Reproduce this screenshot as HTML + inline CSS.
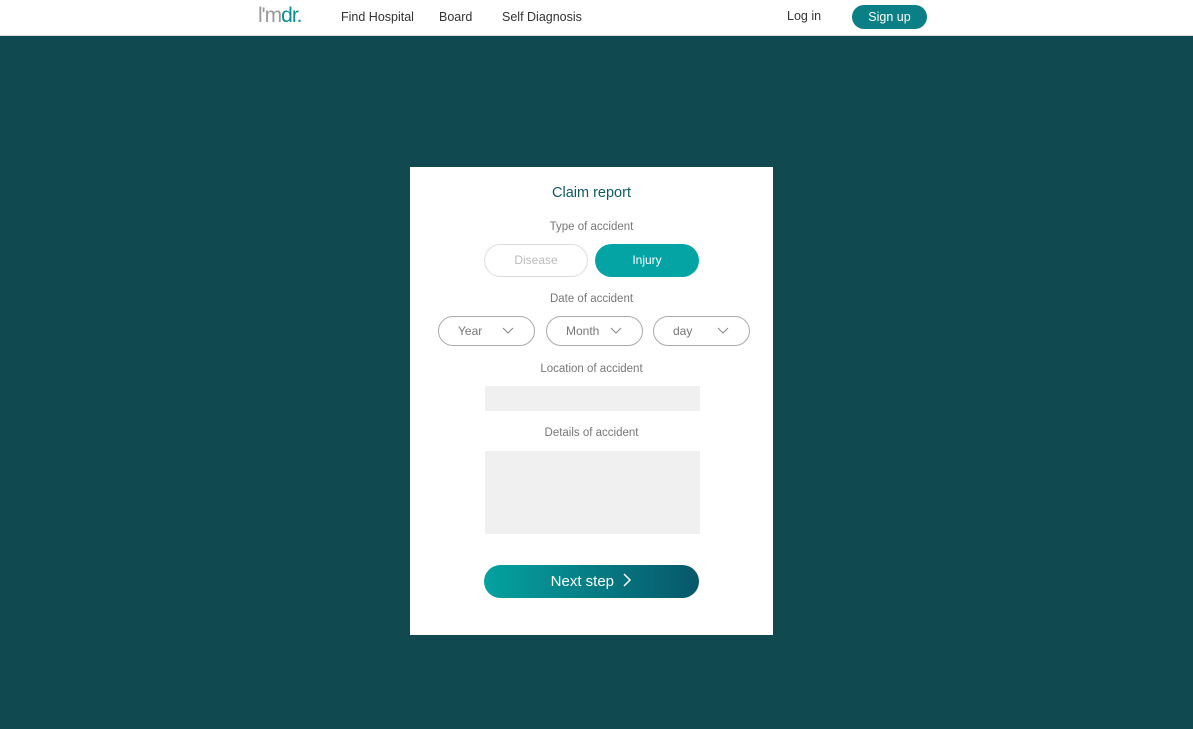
<!DOCTYPE html>
<html><head><style>
*{box-sizing:border-box;margin:0;padding:0}
body{width:1193px;height:729px;background:#114950;font-family:"Liberation Sans",sans-serif;position:relative;overflow:hidden}
.hdr{position:absolute;left:0;top:0;width:1193px;height:36px;background:#fff;border-bottom:1px solid #ddd}
.t{position:absolute;white-space:nowrap}
.nav{font-size:12.5px;color:#333;top:10px}
.card{position:absolute;left:410px;top:167px;width:363px;height:468px;background:#fff}
.lbl{font-size:11.5px;color:#777;width:363px;text-align:center;left:0}
.pill{position:absolute;border-radius:17px;font-size:12px;text-align:center}
.sel{position:absolute;top:149px;width:97px;height:30px;border:1px solid #aaa;border-radius:15px;font-size:12px;color:#777}
.sel span{position:absolute;left:19px;top:7px}
.sel svg{position:absolute;right:20px;top:10px}
.box{position:absolute;left:75px;width:215px;background:#f0f0f0}
</style></head><body>
<div class="hdr">
<div class="t" style="left:258px;top:4px;font-size:21px;letter-spacing:-1px"><span style="color:#999">l'm</span><span style="color:#0a8f92">dr.</span></div>
<div class="t nav" style="left:341px">Find Hospital</div>
<div class="t nav" style="left:439px">Board</div>
<div class="t nav" style="left:502px">Self Diagnosis</div>
<div class="t nav" style="left:787px;top:9px">Log in</div>
<div style="position:absolute;left:852px;top:5px;width:75px;height:24px;border-radius:12px;background:#0a7f86;color:#fff;font-size:12.5px;text-align:center;line-height:24px">Sign up</div>
</div>
<div class="card">
<div class="t" style="left:0;width:363px;text-align:center;top:18px;font-size:14.5px;color:#0d5a66">Claim report</div>
<div class="t lbl" style="top:54px">Type of accident</div>
<div class="pill" style="left:74px;top:77px;width:104px;height:33px;border:1px solid #ddd;color:#bbb;line-height:31px">Disease</div>
<div class="pill" style="left:185px;top:77px;width:104px;height:33px;background:#04a4a4;color:#fff;line-height:33px">Injury</div>
<div class="t lbl" style="top:126px">Date of accident</div>
<div class="sel" style="left:28px"><span>Year</span><svg width="12" height="8"><path d="M1 1l5 5 5-5" fill="none" stroke="#888"/></svg></div>
<div class="sel" style="left:136px"><span>Month</span><svg width="12" height="8"><path d="M1 1l5 5 5-5" fill="none" stroke="#888"/></svg></div>
<div class="sel" style="left:243px"><span>day</span><svg width="12" height="8"><path d="M1 1l5 5 5-5" fill="none" stroke="#888"/></svg></div>
<div class="t lbl" style="top:196px">Location of accident</div>
<div class="box" style="top:219px;height:25px"></div>
<div class="t lbl" style="top:260px">Details of accident</div>
<div class="box" style="top:284px;height:83px"></div>
<div class="pill" style="left:74px;top:398px;width:215px;height:33px;background:linear-gradient(90deg,#05a2a0,#07576a);color:#fff;font-size:15px;line-height:33px">Next step &nbsp;<svg width="10" height="14" style="vertical-align:-1px"><path d="M2 1l6 6-6 6" fill="none" stroke="#fff" stroke-width="1.5"/></svg></div>
</div>
</body></html>
